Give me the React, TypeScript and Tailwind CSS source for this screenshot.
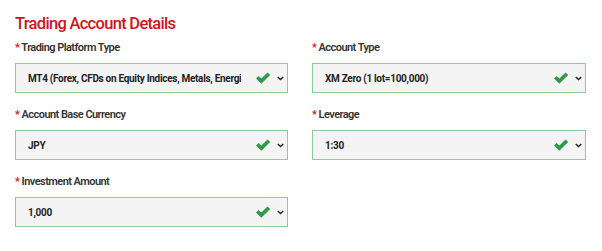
import React from 'react';

// Fields shown in the trading account form
interface Field {
  label: string;
  value: string;
}

const fields: Field[] = [
  { label: 'Trading Platform Type', value: 'MT4 (Forex, CFDs on Equity Indices, Metals, Energies)' },
  { label: 'Account Type', value: 'XM Zero (1 lot=100,000)' },
  { label: 'Account Base Currency', value: 'JPY' },
  { label: 'Leverage', value: '1:30' },
  { label: 'Investment Amount', value: '1,000' },
];

const CheckIcon: React.FC = () => (
  <svg width="16" height="12" viewBox="0 0 16 12" className="shrink-0">
    <path d="M1 6.5 L3.6 4 L6.3 6.6 L12.6 0.4 L15.2 3 L6.3 11.8 Z" fill="#2f9a48" />
  </svg>
);

const Chevron: React.FC = () => (
  <svg width="7" height="5" viewBox="0 0 7 5" className="shrink-0">
    <path d="M0.8 0.9 L3.5 3.6 L6.2 0.9" fill="none" stroke="#222" strokeWidth="1.4" />
  </svg>
);

const SelectField: React.FC<{ field: Field }> = ({ field }) => (
  <div className="flex flex-col">
    <label className="h-4 text-[11px] leading-4 font-semibold tracking-[-0.55px] text-[#333]">
      <span className="text-[#d0141c]">*</span> {field.label}
    </label>
    <div className="mt-[7px] flex h-[30px] items-center border border-[#8fcb98] bg-[#f4f4f4] pl-[12px] pr-[3px]">
      <span className="flex-1 overflow-hidden whitespace-nowrap text-[10px] font-bold tracking-[-0.3px] text-[#222]">{field.value}</span>
      <div className="ml-[14px] flex items-center gap-[6px]">
        <CheckIcon />
        <Chevron />
      </div>
    </div>
  </div>
);

export default function App() {
  return (
    <div className="h-[251px] w-[602px] bg-white pl-[15px] pr-[16px] pt-[12px]" style={{ fontFamily: 'Roboto, "Liberation Sans", sans-serif' }}>
      <h1 className="h-6 text-[16.5px] leading-6 font-medium tracking-[-0.7px] text-[#d0141c]">Trading Account Details</h1>
      <div className="mt-1 grid grid-cols-[273px_274px] gap-x-[24px] gap-y-[14px]">
        {fields.map(f => (
          <SelectField key={f.label} field={f} />
        ))}
      </div>
    </div>
  );
}
